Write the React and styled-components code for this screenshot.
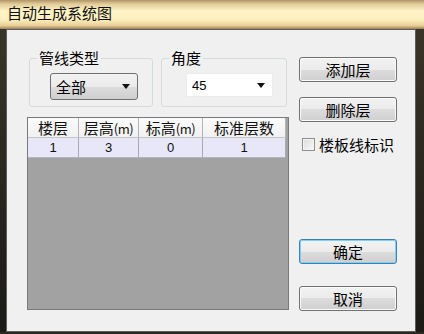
import React from "react";
import styled, { createGlobalStyle } from "styled-components";

const GlobalStyle = createGlobalStyle`
  * { box-sizing: border-box; }
  html, body { margin: 0; padding: 0; background: #1f1d18; }
  body { font-family: "Noto Sans CJK SC", "Liberation Sans", sans-serif; }
`;

const Window = styled.div`
  width: 424px;
  height: 334px;
  display: flex;
  flex-direction: column;
  background: #2b2820;
  overflow: hidden;
`;

const TitleBar = styled.div`
  height: 29px;
  flex: none;
  display: flex;
  align-items: center;
  padding: 0 0 5px 7px;
  font-size: 15px;
  color: #111;
  background: linear-gradient(
    to bottom,
    #b09566 0%,
    #e2cc9a 14%,
    #fff4c6 38%,
    #fcefbe 68%,
    #e8cf96 88%,
    #9a8258 100%
  );
`;

const Body = styled.div`
  flex: 1;
  display: flex;
  padding-bottom: 2px;
`;

const SideFrame = styled.div`
  width: ${(p) => p.$w}px;
  flex: none;
  background: linear-gradient(to bottom, #3a3428, #1c1a16);
`;

const Client = styled.div`
  flex: 1;
  display: flex;
  gap: 10px;
  padding: 20px 18px 19px 20px;
  background: #f0f0f0;
  border: 1px solid #5c5c5c;
`;

const LeftCol = styled.div`
  width: 262px;
  display: flex;
  flex-direction: column;
`;

const GroupRow = styled.div`
  display: flex;
  gap: 8px;
  padding-left: 2px;
  height: 57px;
`;

const Group = styled.fieldset`
  margin: 0;
  padding: 0;
  width: ${(p) => p.$w}px;
  height: 57px;
  border: 1px solid #d5dadd;
  border-radius: 3px;
`;

const Legend = styled.legend`
  margin-left: 7px;
  padding: 0 2px;
  font-size: 15px;
  line-height: 16px;
  color: #000;
`;

const GroupInner = styled.div`
  padding: 7px 0 0 ${(p) => p.$indent}px;
`;

const Dropdown = styled.div`
  width: ${(p) => p.$w}px;
  height: ${(p) => p.$h}px;
  display: flex;
  align-items: center;
  justify-content: space-between;
  padding: 0 7px 0 5px;
  color: #000;
  ${(p) =>
    p.$plain
      ? `
    background: #ffffff;
    border: 1px solid #ececec;
    font-family: "Liberation Sans", sans-serif;
    font-size: 13px;
  `
      : `
    background: linear-gradient(to bottom, #f2f2f2 0%, #ebebeb 50%, #dddddd 50%, #cfcfcf 100%);
    border: 1px solid #707070;
    border-radius: 3px;
    font-size: 15px;
  `}
`;

const Grid = styled.div`
  margin-top: 10px;
  height: 193px;
  background: #a2a2a2;
  border: 1px solid #7a7a7a;
  display: flex;
  flex-direction: column;
`;

const Row = styled.div`
  display: grid;
  grid-template-columns: 51px 60px 64px 83px;
  height: 20px;
`;

const HeadCell = styled.div`
  background: linear-gradient(to bottom, #fbfbfb, #f1f1f1);
  border-right: 1px solid #b4b4b4;
  border-bottom: 1px solid #c4c4c4;
  font-size: 15px;
  line-height: 19px;
  text-align: center;
  color: #111;
  white-space: nowrap;
  overflow: hidden;
`;

const Unit = styled.span`
  font-size: 13px;
  letter-spacing: -0.5px;
`;

const DataCell = styled.div`
  background: #e7e7f7;
  border-right: 1px solid #a9a9b4;
  border-bottom: 1px solid #b4b4c0;
  font-family: "Liberation Sans", sans-serif;
  font-size: 13px;
  line-height: 19px;
  text-align: center;
  color: #111;
`;

const RightCol = styled.div`
  width: 98px;
  display: flex;
  flex-direction: column;
`;

const Button = styled.div`
  height: 25px;
  margin-top: ${(p) => p.$mt}px;
  display: flex;
  align-items: center;
  justify-content: center;
  font-size: 15px;
  color: #000;
  border-radius: 3px;
  border: 1px solid ${(p) => (p.$default ? "#3c7fb1" : "#707070")};
  box-shadow: ${(p) => (p.$default ? "inset 0 0 0 1px #7fd0f5" : "inset 0 0 0 1px #fbfbfb")};
  background: linear-gradient(to bottom, #f2f2f2 0%, #ebebeb 50%, #dddddd 50%, #cfcfcf 100%);
`;

const CheckRow = styled.div`
  margin-top: 15px;
  margin-left: 3px;
  height: 14px;
  display: flex;
  align-items: center;
  gap: 4px;
  font-size: 15px;
  color: #000;
`;

const CheckBox = styled.div`
  width: 13px;
  height: 13px;
  border: 1px solid #8e8f8f;
  background: linear-gradient(135deg, #dcdcdc, #f9f9f9);
  box-shadow: inset 0 0 0 1px #f4f4f4;
`;

const Arrow = () => (
  <svg width="8" height="5" viewBox="0 0 8 5">
    <polygon points="0,0 8,0 4,5" fill="#111" />
  </svg>
);

const headers = [
  ["楼层", ""],
  ["层高", "(m)"],
  ["标高", "(m)"],
  ["标准层数", ""],
];
const floors = [["1", "3", "0", "1"]];

export default function App() {
  return (
    <>
      <GlobalStyle />
      <Window>
        <TitleBar>自动生成系统图</TitleBar>
        <Body>
          <SideFrame $w={6} />
          <Client>
            <LeftCol>
              <GroupRow>
                <Group $w={124}>
                  <Legend>管线类型</Legend>
                  <GroupInner $indent={20}>
                    <Dropdown $w={88} $h={27}>
                      全部
                      <Arrow />
                    </Dropdown>
                  </GroupInner>
                </Group>
                <Group $w={126}>
                  <Legend>角度</Legend>
                  <GroupInner $indent={24}>
                    <Dropdown $w={87} $h={24} $plain>
                      45
                      <Arrow />
                    </Dropdown>
                  </GroupInner>
                </Group>
              </GroupRow>
              <Grid>
                <Row>
                  {headers.map(([h, u]) => (
                    <HeadCell key={h}>
                      {h}
                      {u && <Unit>{u}</Unit>}
                    </HeadCell>
                  ))}
                </Row>
                {floors.map((r, i) => (
                  <Row key={i}>
                    {r.map((v, j) => (
                      <DataCell key={j}>{v}</DataCell>
                    ))}
                  </Row>
                ))}
              </Grid>
            </LeftCol>
            <RightCol>
              <Button $mt={7}>添加层</Button>
              <Button $mt={15}>删除层</Button>
              <CheckRow>
                <CheckBox />
                楼板线标识
              </CheckRow>
              <Button $mt={88} $default>
                确定
              </Button>
              <Button $mt={22}>取消</Button>
            </RightCol>
          </Client>
          <SideFrame $w={8} />
        </Body>
      </Window>
    </>
  );
}
